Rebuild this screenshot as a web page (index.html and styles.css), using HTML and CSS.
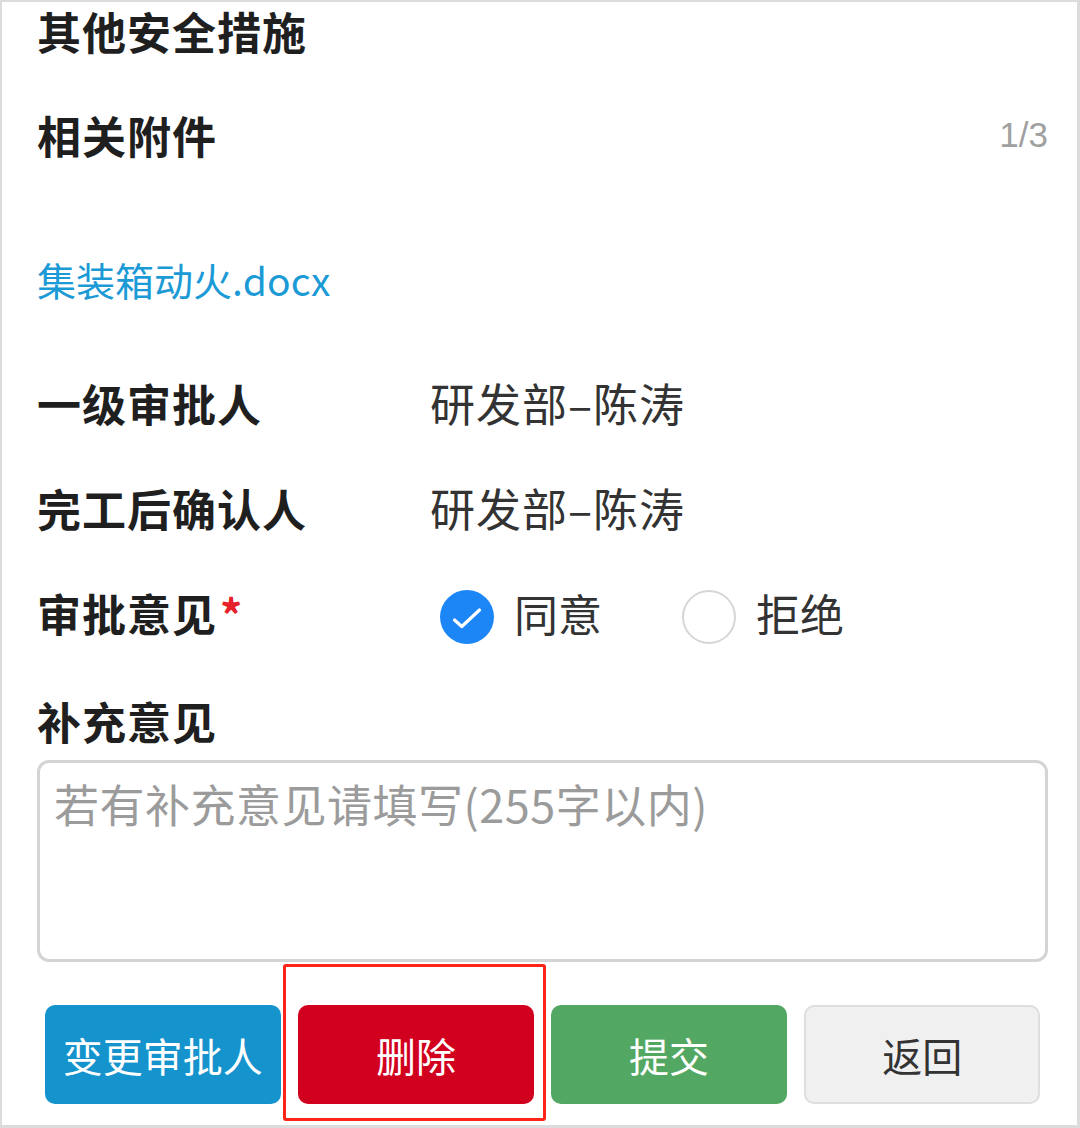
FILE: index.html
```html
<!DOCTYPE html>
<html lang="zh-CN">
<head>
<meta charset="utf-8">
<title>审批</title>
<link rel="stylesheet" href="styles.css">
</head>
<body>
<div class="page">
  <div class="title">其他安全措施</div>
  <div class="attach-head">
    <span class="label">相关附件</span>
    <span class="count">1/3</span>
  </div>
  <div class="file"><a class="file-link">集装箱动火.docx</a></div>
  <div class="rows">
    <div class="row">
      <span class="label col-label">一级审批人</span>
      <span class="value">研发部–陈涛</span>
    </div>
    <div class="row">
      <span class="label col-label">完工后确认人</span>
      <span class="value">研发部–陈涛</span>
    </div>
    <div class="row">
      <span class="label col-label">审批意见<span class="req">*</span></span>
      <div class="radios">
        <span class="radio checked">
          <svg viewBox="0 0 54 54" width="54" height="54"><circle cx="27" cy="27" r="27" fill="#1c86f7"/><path d="M14.5 30 L21.8 36.5 L39.5 20" fill="none" stroke="#fff" stroke-width="3.2" stroke-linecap="round" stroke-linejoin="round"/></svg>
        </span>
        <span class="radio-text">同意</span>
        <span class="radio unchecked"></span>
        <span class="radio-text">拒绝</span>
      </div>
    </div>
  </div>
  <div class="sub-label label">补充意见</div>
  <div class="textarea">若有补充意见请填写(255字以内)</div>
  <div class="buttons">
    <button class="btn btn-blue">变更审批人</button>
    <button class="btn btn-red">删除</button>
    <button class="btn btn-green">提交</button>
    <button class="btn btn-gray">返回</button>
  </div>
</div>
</body>
</html>
```
FILE: styles.css
```css
html, body {
  margin: 0;
  padding: 0;
  background: #ffffff;
}
.page {
  box-sizing: border-box;
  width: 1080px;
  height: 1128px;
  border-style: solid;
  border-color: #dcdcdc;
  border-width: 2px 3px 3px 2px;
  padding: 0 29px 0 35px;
  overflow: hidden;
  font-family: "Noto Sans CJK SC", "Noto Sans", sans-serif;
  color: #333;
}
.label {
  font-size: 44px;
  font-weight: 700;
  letter-spacing: 1px;
  color: #1f1f1f;
}
.title {
  height: 58px;
  line-height: 58px;
  font-size: 44px;
  font-weight: 700;
  letter-spacing: 1px;
  color: #1f1f1f;
}
.attach-head {
  margin-top: 42px;
  height: 66px;
  line-height: 66px;
  display: flex;
  justify-content: space-between;
  align-items: center;
}
.count {
  font-family: "Liberation Sans", Arial, sans-serif;
  font-size: 35px;
  color: #a0a0a0;
}
.file {
  margin-top: 78px;
  height: 66px;
  line-height: 66px;
}
.file-link {
  font-size: 39px;
  color: #1b9ad6;
}
.rows {
  margin-top: 38px;
}
.row {
  height: 105px;
  display: flex;
  align-items: center;
}
.col-label {
  width: 393px;
  flex: none;
}
.req {
  color: #e6212a;
  margin-left: 3px;
}
.value {
  font-size: 45px;
  letter-spacing: 1px;
  color: #333;
}
.radios {
  display: flex;
  align-items: center;
  padding-left: 10px;
}
.radio {
  width: 54px;
  height: 54px;
  display: block;
  flex: none;
  margin-top: 8px;
}
.radio svg {
  display: block;
}
.unchecked {
  box-sizing: border-box;
  border: 2px solid #d6d6d6;
  border-radius: 50%;
}
.radio-text {
  font-size: 44px;
  color: #333;
  margin-left: 20px;
  margin-right: 80px;
}
.sub-label {
  margin-top: 23px;
  height: 66px;
  line-height: 66px;
}
.textarea {
  margin-top: 6px;
  box-sizing: border-box;
  height: 202px;
  border: 3px solid #d4d4d4;
  border-radius: 12px;
  padding: 10px 14px;
  font-size: 45px;
  letter-spacing: 0.5px;
  line-height: 62px;
  color: #9b9b9b;
}
.buttons {
  margin-top: 43px;
  padding: 0 8px;
  display: grid;
  grid-template-columns: repeat(4, 1fr);
  gap: 17.5px;
}
.btn {
  box-sizing: border-box;
  height: 99px;
  border: none;
  border-radius: 10px;
  font-family: "Noto Sans CJK SC", "Noto Sans", sans-serif;
  font-size: 40px;
  color: #fff;
  padding: 0;
}
.btn-blue { background: #1593cd; }
.btn-red {
  background: #d2001f;
  position: relative;
}
.btn-red::after {
  content: "";
  position: absolute;
  left: -15px;
  right: -12px;
  top: -41px;
  bottom: -17px;
  border: 3px solid #ff2418;
  border-radius: 3px;
}
.btn-green { background: #52a862; }
.btn-gray {
  background: #f0f0f0;
  border: 2px solid #dedede;
  color: #333;
}
```
